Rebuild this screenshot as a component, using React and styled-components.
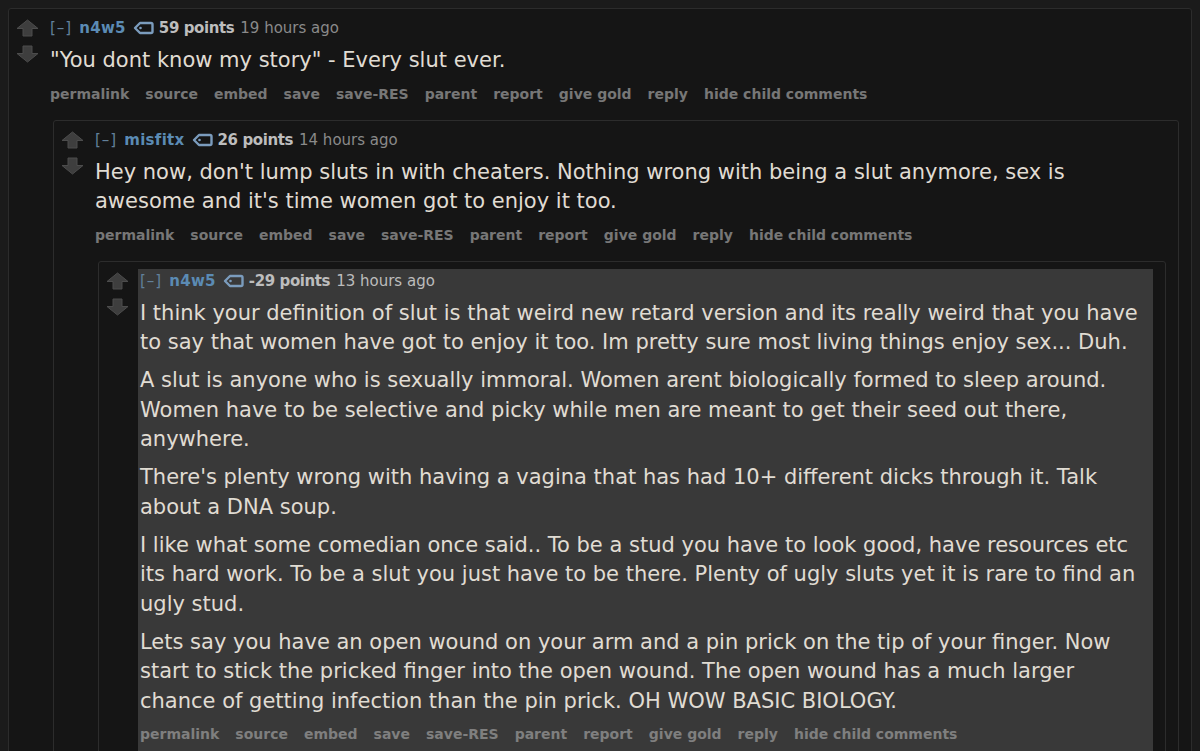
import React from "react";
import styled, { createGlobalStyle } from "styled-components";

const GlobalStyle = createGlobalStyle`
  html, body {
    background: #1b1b1b;
  }
  body {
    margin: 8px;
    font-family: "DejaVu Sans", Verdana, sans-serif;
  }
`;

const CommentBox = styled.div`
  display: grid;
  grid-template-columns: 32px 1fr;
  background: #151515;
  border: 1px solid #2c2c2c;
  border-radius: 3px;
  padding: 7px 12px 0 7px;
  margin-left: ${(p) => (p.$nested ? "5px" : "0")};
  margin-top: ${(p) => (p.$nested ? "16px" : "0")};
  min-height: ${(p) => p.$minH || "auto"};
`;

const Midcol = styled.div`
  display: flex;
  flex-direction: column;
  gap: 8px;
  padding-top: 3px;
`;

const Entry = styled.div`
  background: ${(p) => (p.$new ? "#393939" : "transparent")};
  padding: 0 4px ${(p) => (p.$new ? "2px" : "0")} 2px;
`;

const Tagline = styled.div`
  font-size: 15px;
  line-height: 22px;
  color: #8a8a8a;
  display: flex;
  align-items: center;
  white-space: nowrap;
  padding-top: 1px;
`;

const Expand = styled.span`
  color: #62809a;
  margin-right: 7px;
  letter-spacing: 1px;
`;

const Author = styled.span`
  color: #5b8bb4;
  font-weight: bold;
  letter-spacing: 0.3px;
`;

const Score = styled.span`
  color: #bdbdbd;
  font-weight: bold;
  letter-spacing: -0.4px;
  margin-right: 6px;
`;

const Time = styled.span`
  color: ${(p) => (p.$new ? "#bcbcbc" : "#8a8a8a")};
`;

const TagIcon = styled.svg`
  margin: 0 5px 0 7px;
  flex: none;
`;

const Body = styled.div`
  margin-top: 7px;
  color: #e0dcd3;
  font-size: 21px;
  line-height: 29.5px;
  white-space: nowrap;

  p {
    margin: 0 0 8.5px;
  }
  p:last-child {
    margin-bottom: 0;
  }
`;

const Buttons = styled.ul`
  list-style: none;
  margin: 8px 0 0;
  padding: 0;
  display: flex;
  gap: 16px;
  font-size: 14px;
  line-height: 20px;
  font-weight: bold;
  color: ${(p) => (p.$new ? "#7f7f7f" : "#777777")};
  white-space: nowrap;
`;

const Child = styled.div`
  grid-column: 2;
`;

const Arrow = ({ down }) => (
  <svg width="23" height="18" viewBox="0 0 23 18">
    <path
      d="M11.5 1 L22 9.5 H16 V17 H7 V9.5 H1 Z"
      transform={down ? "rotate(180 11.5 9)" : undefined}
      fill="#3e3e3e"
      stroke="#4c4c4c"
      strokeWidth="1"
      strokeLinejoin="round"
    />
  </svg>
);

const Tag = () => (
  <TagIcon width="21" height="14" viewBox="0 0 21 14">
    <path
      d="M2 7 L7 2 H18 Q19.5 2 19.5 3.5 V10.5 Q19.5 12 18 12 H7 Z"
      fill="none"
      stroke="#7b9cbd"
      strokeWidth="2.4"
      strokeLinejoin="round"
    />
    <circle cx="7.5" cy="7" r="1.3" fill="#7b9cbd" />
  </TagIcon>
);

const BUTTONS = [
  "permalink",
  "source",
  "embed",
  "save",
  "save-RES",
  "parent",
  "report",
  "give gold",
  "reply",
  "hide child comments",
];

const Comment = ({ author, score, time, paragraphs, isNew, nested, children, minH }) => (
  <CommentBox $nested={nested} $minH={minH}>
    <Midcol>
      <Arrow />
      <Arrow down />
    </Midcol>
    <Entry $new={isNew}>
      <Tagline>
        <Expand>[–]</Expand>
        <Author>{author}</Author>
        <Tag />
        <Score>{score} points</Score>
        <Time $new={isNew}>{time}</Time>
      </Tagline>
      <Body>
        {paragraphs.map((lines, i) => (
          <p key={i}>
            {lines.map((l, j) => (
              <React.Fragment key={j}>
                {j > 0 && <br />}
                {l}
              </React.Fragment>
            ))}
          </p>
        ))}
      </Body>
      <Buttons $new={isNew}>
        {BUTTONS.map((b) => (
          <li key={b}>{b}</li>
        ))}
      </Buttons>
    </Entry>
    {children && <Child>{children}</Child>}
  </CommentBox>
);

export default function App() {
  return (
    <>
      <GlobalStyle />
      <Comment
        author="n4w5"
        score="59"
        time="19 hours ago"
        paragraphs={[['"You dont know my story" - Every slut ever.']]}
      >
        <Comment
          nested
          author="misfitx"
          score="26"
          time="14 hours ago"
          paragraphs={[
            [
              "Hey now, don't lump sluts in with cheaters. Nothing wrong with being a slut anymore, sex is",
              "awesome and it's time women got to enjoy it too.",
            ],
          ]}
        >
          <Comment
            nested
            isNew
            author="n4w5"
            score="-29"
            time="13 hours ago"
            minH="520px"
            paragraphs={[
              [
                "I think your definition of slut is that weird new retard version and its really weird that you have",
                "to say that women have got to enjoy it too. Im pretty sure most living things enjoy sex... Duh.",
              ],
              [
                "A slut is anyone who is sexually immoral. Women arent biologically formed to sleep around.",
                "Women have to be selective and picky while men are meant to get their seed out there,",
                "anywhere.",
              ],
              [
                "There's plenty wrong with having a vagina that has had 10+ different dicks through it. Talk",
                "about a DNA soup.",
              ],
              [
                "I like what some comedian once said.. To be a stud you have to look good, have resources etc",
                "its hard work. To be a slut you just have to be there. Plenty of ugly sluts yet it is rare to find an",
                "ugly stud.",
              ],
              [
                "Lets say you have an open wound on your arm and a pin prick on the tip of your finger. Now",
                "start to stick the pricked finger into the open wound. The open wound has a much larger",
                "chance of getting infection than the pin prick. OH WOW BASIC BIOLOGY.",
              ],
            ]}
          />
        </Comment>
      </Comment>
    </>
  );
}
